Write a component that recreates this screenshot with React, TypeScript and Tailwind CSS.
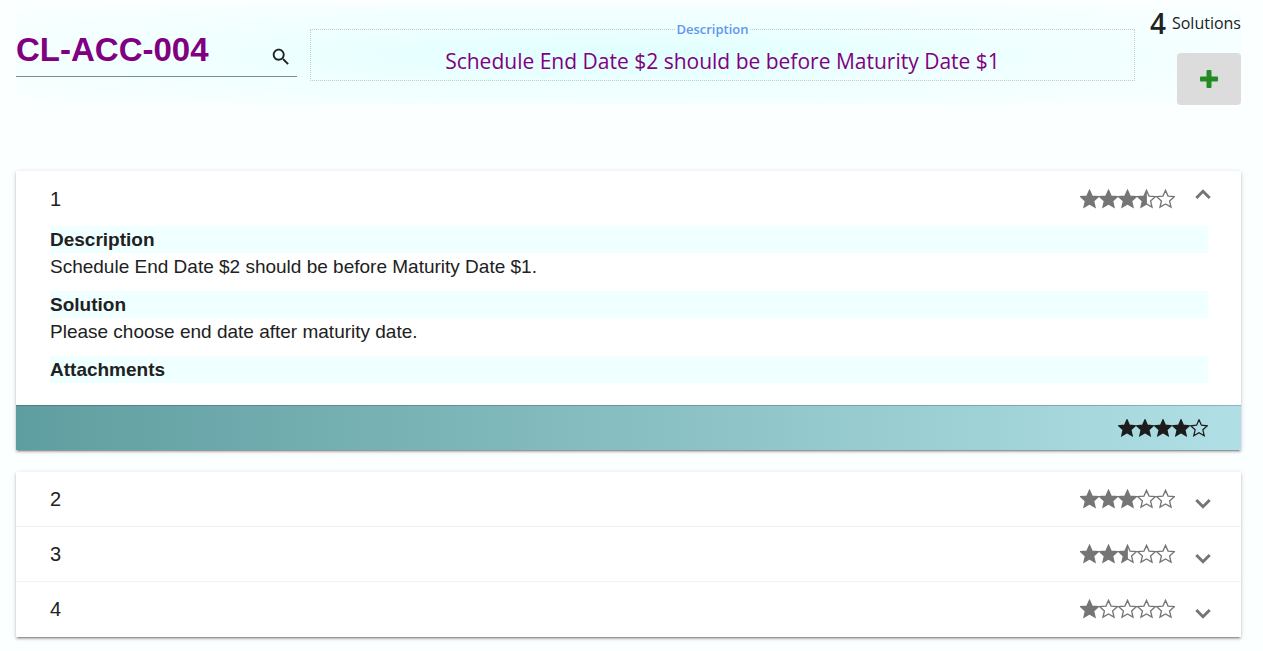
import { useState } from "react";

const STAR =
  "M10 0.9 L12.7 6.9 L19.3 7.5 L14.3 12 L15.8 18.6 L10 15.2 L4.2 18.6 L5.7 12 L0.7 7.5 L7.3 6.9 Z";

function Star({ fill }: { fill: number }) {
  return (
    <svg viewBox="0 0 20 20" className="size-full" aria-hidden="true">
      <path d={STAR} fill="none" stroke="currentColor" strokeWidth="1.4" />
      {fill === 1 && <path d={STAR} fill="currentColor" />}
      {fill === 0.5 && (
        <path
          d="M10.4 0.9 L10.4 15.2 L4.2 18.6 L5.7 12 L0.7 7.5 L7.3 6.9 Z"
          fill="currentColor"
        />
      )}
    </svg>
  );
}

function fillAt(value: number, index: number) {
  return Math.max(0, Math.min(1, value - index));
}

function Rating({ value }: { value: number }) {
  return (
    <span role="img" aria-label={`${value} of 5 stars`} className="flex text-[#757575]">
      {[0, 1, 2, 3, 4].map((i) => (
        <span key={i} className="h-5 w-[19px]">
          <Star fill={fillAt(value, i)} />
        </span>
      ))}
    </span>
  );
}

function RatingInput() {
  const [value, setValue] = useState(4);
  return (
    <div className="flex text-[#1c1c1c]">
      {[0, 1, 2, 3, 4].map((i) => (
        <button
          key={i}
          type="button"
          aria-label={`Rate ${i + 1}`}
          onClick={() => setValue(i + 1)}
          className="h-[18px] w-[18px]"
        >
          <Star fill={fillAt(value, i)} />
        </button>
      ))}
    </div>
  );
}

function Chevron({ up = false }: { up?: boolean }) {
  return (
    <svg
      viewBox="0 0 24 24"
      className="size-6 fill-none stroke-[#757575] stroke-[3px]"
      aria-hidden="true"
    >
      <path d={up ? "M5.3 15 L12 8.3 L18.7 15" : "M5.3 9 L12 15.7 L18.7 9"} />
    </svg>
  );
}

const PANEL =
  "bg-white shadow-[0px_3px_1px_-2px_rgba(0,0,0,0.2),0px_2px_2px_0px_rgba(0,0,0,0.2),0px_1px_5px_0px_rgba(0,0,0,0.14)]";

function Section({ title, text }: { title: string; text?: string }) {
  return (
    <section className="mb-[11px] text-[19px] leading-[27px]">
      <h2 className="bg-[#f0ffff] font-bold">{title}</h2>
      {text && <p>{text}</p>}
    </section>
  );
}

const OTHERS = [
  { id: 2, rating: 3 },
  { id: 3, rating: 2.5 },
  { id: 4, rating: 1 },
];

export default function App() {
  const [code, setCode] = useState("CL-ACC-004");
  const [open, setOpen] = useState(true);
  return (
    <main className="min-h-screen bg-[#fbffff] pt-[5px] pr-[22px] pl-4 font-['Liberation_Sans',Arial,sans-serif] text-[#212121]">
      <header className="flex h-[100px] items-start bg-[radial-gradient(ellipse,#e0ffff,#f0ffff,#fbffff)]">
        <div className="mt-4 flex h-14 w-[281px] items-center border-b border-[#7f8c8c]">
          <input
            aria-label="Error code"
            value={code}
            onChange={(e) => setCode(e.target.value)}
            className="min-w-0 flex-1 bg-transparent pt-0.5 text-[33px] font-bold text-[#800080] outline-none"
          />
          <button type="button" aria-label="Search" className="mt-4 mr-1 grid size-6 place-items-center">
            <svg viewBox="0 0 24 24" className="size-[22px] fill-[#212121]" aria-hidden="true">
              <path d="M15.5 14h-.79l-.28-.27C15.41 12.59 16 11.11 16 9.5 16 5.91 13.09 3 9.5 3S3 5.91 3 9.5 5.91 16 9.5 16c1.61 0 3.09-.59 4.23-1.57l.27.28v.79l5 4.99L20.49 19l-4.99-5zm-6 0C7.01 14 5 11.99 5 9.5S7.01 5 9.5 5 14 7.01 14 9.5 11.99 14 9.5 14z" />
            </svg>
          </button>
        </div>
        <fieldset className="mt-3 ml-[13px] h-16 min-w-0 flex-1 border border-dotted border-[#c8c8c8] px-0 text-center font-['Open_Sans',sans-serif]">
          <legend className="mr-auto ml-[44.4%] h-6 text-[13px] leading-6 font-semibold text-[#6495ed]">
            Description
          </legend>
          <p className="text-[21px] leading-10 text-[#800080]">
            Schedule End Date $2 should be before Maturity Date $1
          </p>
        </fieldset>
        <div className="flex w-[106px] flex-col items-end font-['Open_Sans',sans-serif]">
          <p className="flex h-12 items-start gap-1.5 leading-9">
            <span className="text-[28px] font-semibold">4</span>
            <span className="text-base leading-9">Solutions</span>
          </p>
          <button
            type="button"
            aria-label="Add solution"
            className="grid h-[52px] w-16 place-items-center rounded bg-[#dcdcdc]"
          >
            <svg viewBox="0 0 18 18" className="size-[18px] fill-[#228b22]" aria-hidden="true">
              <rect x="6.5" y="0" width="5" height="18" rx="1" />
              <rect x="0" y="6.5" width="18" height="5" rx="1" />
            </svg>
          </button>
        </div>
      </header>

      <article className={`mt-[66px] ${PANEL}`}>
        <button
          type="button"
          aria-expanded={open}
          onClick={() => setOpen(!open)}
          className="flex h-[55px] w-full items-center pr-[26px] pl-[34px] text-left"
        >
          <span className="flex-1 text-xl">1</span>
          <Rating value={3.5} />
          <span className="mb-2 ml-4">
            <Chevron up={open} />
          </span>
        </button>
        {open && (
          <>
            <div className="pr-[33px] pb-[11px] pl-[34px]">
              <Section title="Description" text="Schedule End Date $2 should be before Maturity Date $1." />
              <Section title="Solution" text="Please choose end date after maturity date." />
              <Section title="Attachments" />
            </div>
            <footer className="flex h-[45px] items-center justify-end border-t border-black/20 bg-linear-to-r from-[#5f9ea0] to-[#b0e0e6] pr-[33px]">
              <RatingInput />
            </footer>
          </>
        )}
      </article>

      <ul className={`mt-[22px] ${PANEL}`}>
        {OTHERS.map((s) => (
          <li key={s.id} className="border-b border-[#f2f2f2] last:border-white">
            <button type="button" className="flex h-[54px] w-full items-center pr-[26px] pl-[34px] text-left">
              <span className="flex-1 text-xl">{s.id}</span>
              <Rating value={s.rating} />
              <span className="mt-2 ml-4">
                <Chevron />
              </span>
            </button>
          </li>
        ))}
      </ul>
    </main>
  );
}
